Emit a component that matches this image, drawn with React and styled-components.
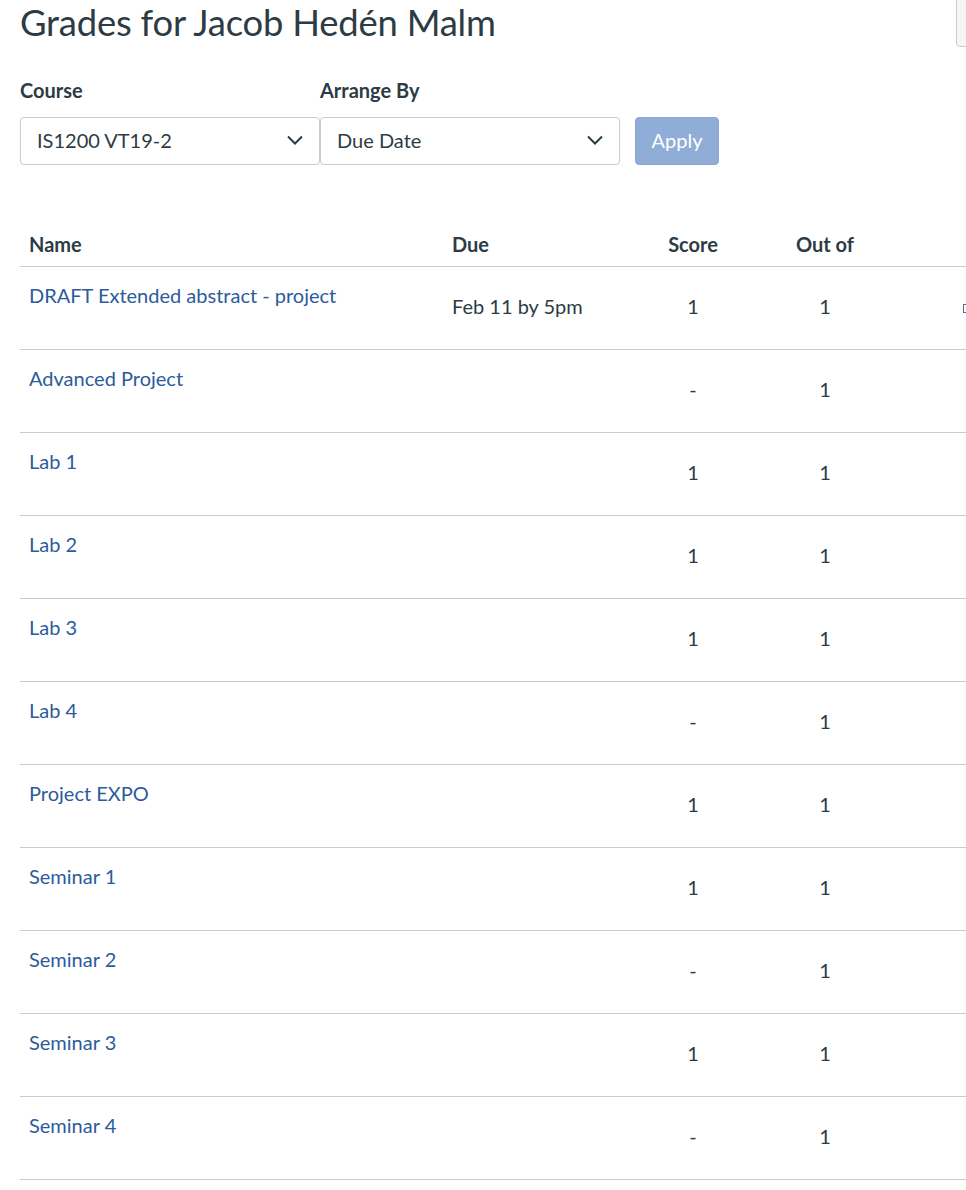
import React from "react";
import styled, { createGlobalStyle } from "styled-components";

const GlobalStyle = createGlobalStyle`
  html, body {
    margin: 0;
    padding: 0;
    background: #fff;
    overflow: hidden;
  }
  body {
    font-family: Lato, "Liberation Sans", sans-serif;
    color: #2d3b45;
  }
`;

const assignments = [
  { name: "DRAFT Extended abstract - project", due: "Feb 11 by 5pm", score: "1", outOf: "1", flag: true },
  { name: "Advanced Project", due: "", score: "-", outOf: "1" },
  { name: "Lab 1", due: "", score: "1", outOf: "1" },
  { name: "Lab 2", due: "", score: "1", outOf: "1" },
  { name: "Lab 3", due: "", score: "1", outOf: "1" },
  { name: "Lab 4", due: "", score: "-", outOf: "1" },
  { name: "Project EXPO", due: "", score: "1", outOf: "1" },
  { name: "Seminar 1", due: "", score: "1", outOf: "1" },
  { name: "Seminar 2", due: "", score: "-", outOf: "1" },
  { name: "Seminar 3", due: "", score: "1", outOf: "1" },
  { name: "Seminar 4", due: "", score: "-", outOf: "1" },
];

const Page = styled.div`
  width: 1080px;
  padding: 0 20px;
  box-sizing: border-box;
`;

const Header = styled.div`
  display: flex;
  align-items: flex-start;
  justify-content: space-between;
`;

const Title = styled.h1`
  margin: 0;
  font-size: 36.4px;
  font-weight: 400;
  line-height: 45px;
  letter-spacing: -0.2px;
`;

const CornerButton = styled.div`
  width: 100px;
  height: 50px;
  margin-top: -5px;
  margin-right: 2px;
  border: 1px solid #c7cdd1;
  border-radius: 4px;
  background: #f5f5f5;
`;

const Filters = styled.div`
  display: flex;
  align-items: flex-end;
  margin-top: 31px;
`;

const Field = styled.div`
  display: flex;
  flex-direction: column;
  gap: 14px;
`;

const Label = styled.span`
  font-size: 20px;
  font-weight: 700;
  line-height: 25px;
`;

const Select = styled.div`
  width: 300px;
  height: 48px;
  box-sizing: border-box;
  border: 1px solid #c7cdd1;
  border-radius: 4px;
  display: flex;
  align-items: center;
  justify-content: space-between;
  padding: 0 15px 2px 16px;
  font-size: 20px;
  background: #fff;
`;

const ApplyButton = styled.button`
  margin-left: 15px;
  width: 84px;
  height: 48px;
  border: 1px solid #8aa8d2;
  border-radius: 4px;
  background: #8fadd7;
  color: #fff;
  font-family: Lato, "Liberation Sans", sans-serif;
  font-size: 20px;
  padding: 0 0 3px;
`;

const Table = styled.div`
  margin-top: 57px;
`;

const columns = "423px 185px 130px 134px 1fr";

const HeadRow = styled.div`
  display: grid;
  grid-template-columns: ${columns};
  height: 44px;
  align-items: center;
  border-bottom: 1px solid #c7cdd1;
`;

const HeadCell = styled.div`
  font-size: 20px;
  font-weight: 700;
  padding-left: ${(p) => (p.$center ? 0 : "9px")};
  text-align: ${(p) => (p.$center ? "center" : "left")};
`;

const Row = styled.div`
  display: grid;
  grid-template-columns: ${columns};
  height: 83px;
  box-sizing: border-box;
  border-bottom: 1px solid #c7cdd1;
  font-size: 20px;
  line-height: 25px;
`;

const NameCell = styled.div`
  padding: 16px 0 0 9px;
`;

const NameLink = styled.a`
  color: #2d5b9c;
  text-decoration: none;
`;

const Cell = styled.div`
  display: flex;
  align-items: center;
  justify-content: ${(p) => (p.$center ? "center" : "flex-start")};
  padding-left: ${(p) => (p.$center ? 0 : "9px")};
  padding-bottom: 3px;
`;

const FlagCell = styled.div`
  display: flex;
  align-items: center;
  padding-left: 71px;
`;

const FlagBox = styled.span`
  width: 8px;
  height: 9px;
  border: 1px solid #5a6c7d;
  box-sizing: border-box;
`;

const Chevron = () => (
  <svg width="18" height="12" viewBox="0 0 18 12" fill="none">
    <path d="M2 2.5 L9 9.5 L16 2.5" stroke="#2d3b45" strokeWidth="2" />
  </svg>
);

export default function App() {
  return (
    <Page>
      <GlobalStyle />
      <Header>
        <Title>Grades for Jacob Hedén Malm</Title>
        <CornerButton />
      </Header>
      <Filters>
        <Field>
          <Label>Course</Label>
          <Select>
            IS1200 VT19-2
            <Chevron />
          </Select>
        </Field>
        <Field>
          <Label>Arrange By</Label>
          <Select>
            Due Date
            <Chevron />
          </Select>
        </Field>
        <ApplyButton>Apply</ApplyButton>
      </Filters>
      <Table>
        <HeadRow>
          <HeadCell>Name</HeadCell>
          <HeadCell>Due</HeadCell>
          <HeadCell $center>Score</HeadCell>
          <HeadCell $center>Out of</HeadCell>
          <HeadCell />
        </HeadRow>
        {assignments.map((a) => (
          <Row key={a.name}>
            <NameCell>
              <NameLink href="#">{a.name}</NameLink>
            </NameCell>
            <Cell>{a.due}</Cell>
            <Cell $center>{a.score}</Cell>
            <Cell $center>{a.outOf}</Cell>
            <FlagCell>{a.flag && <FlagBox />}</FlagCell>
          </Row>
        ))}
      </Table>
    </Page>
  );
}
